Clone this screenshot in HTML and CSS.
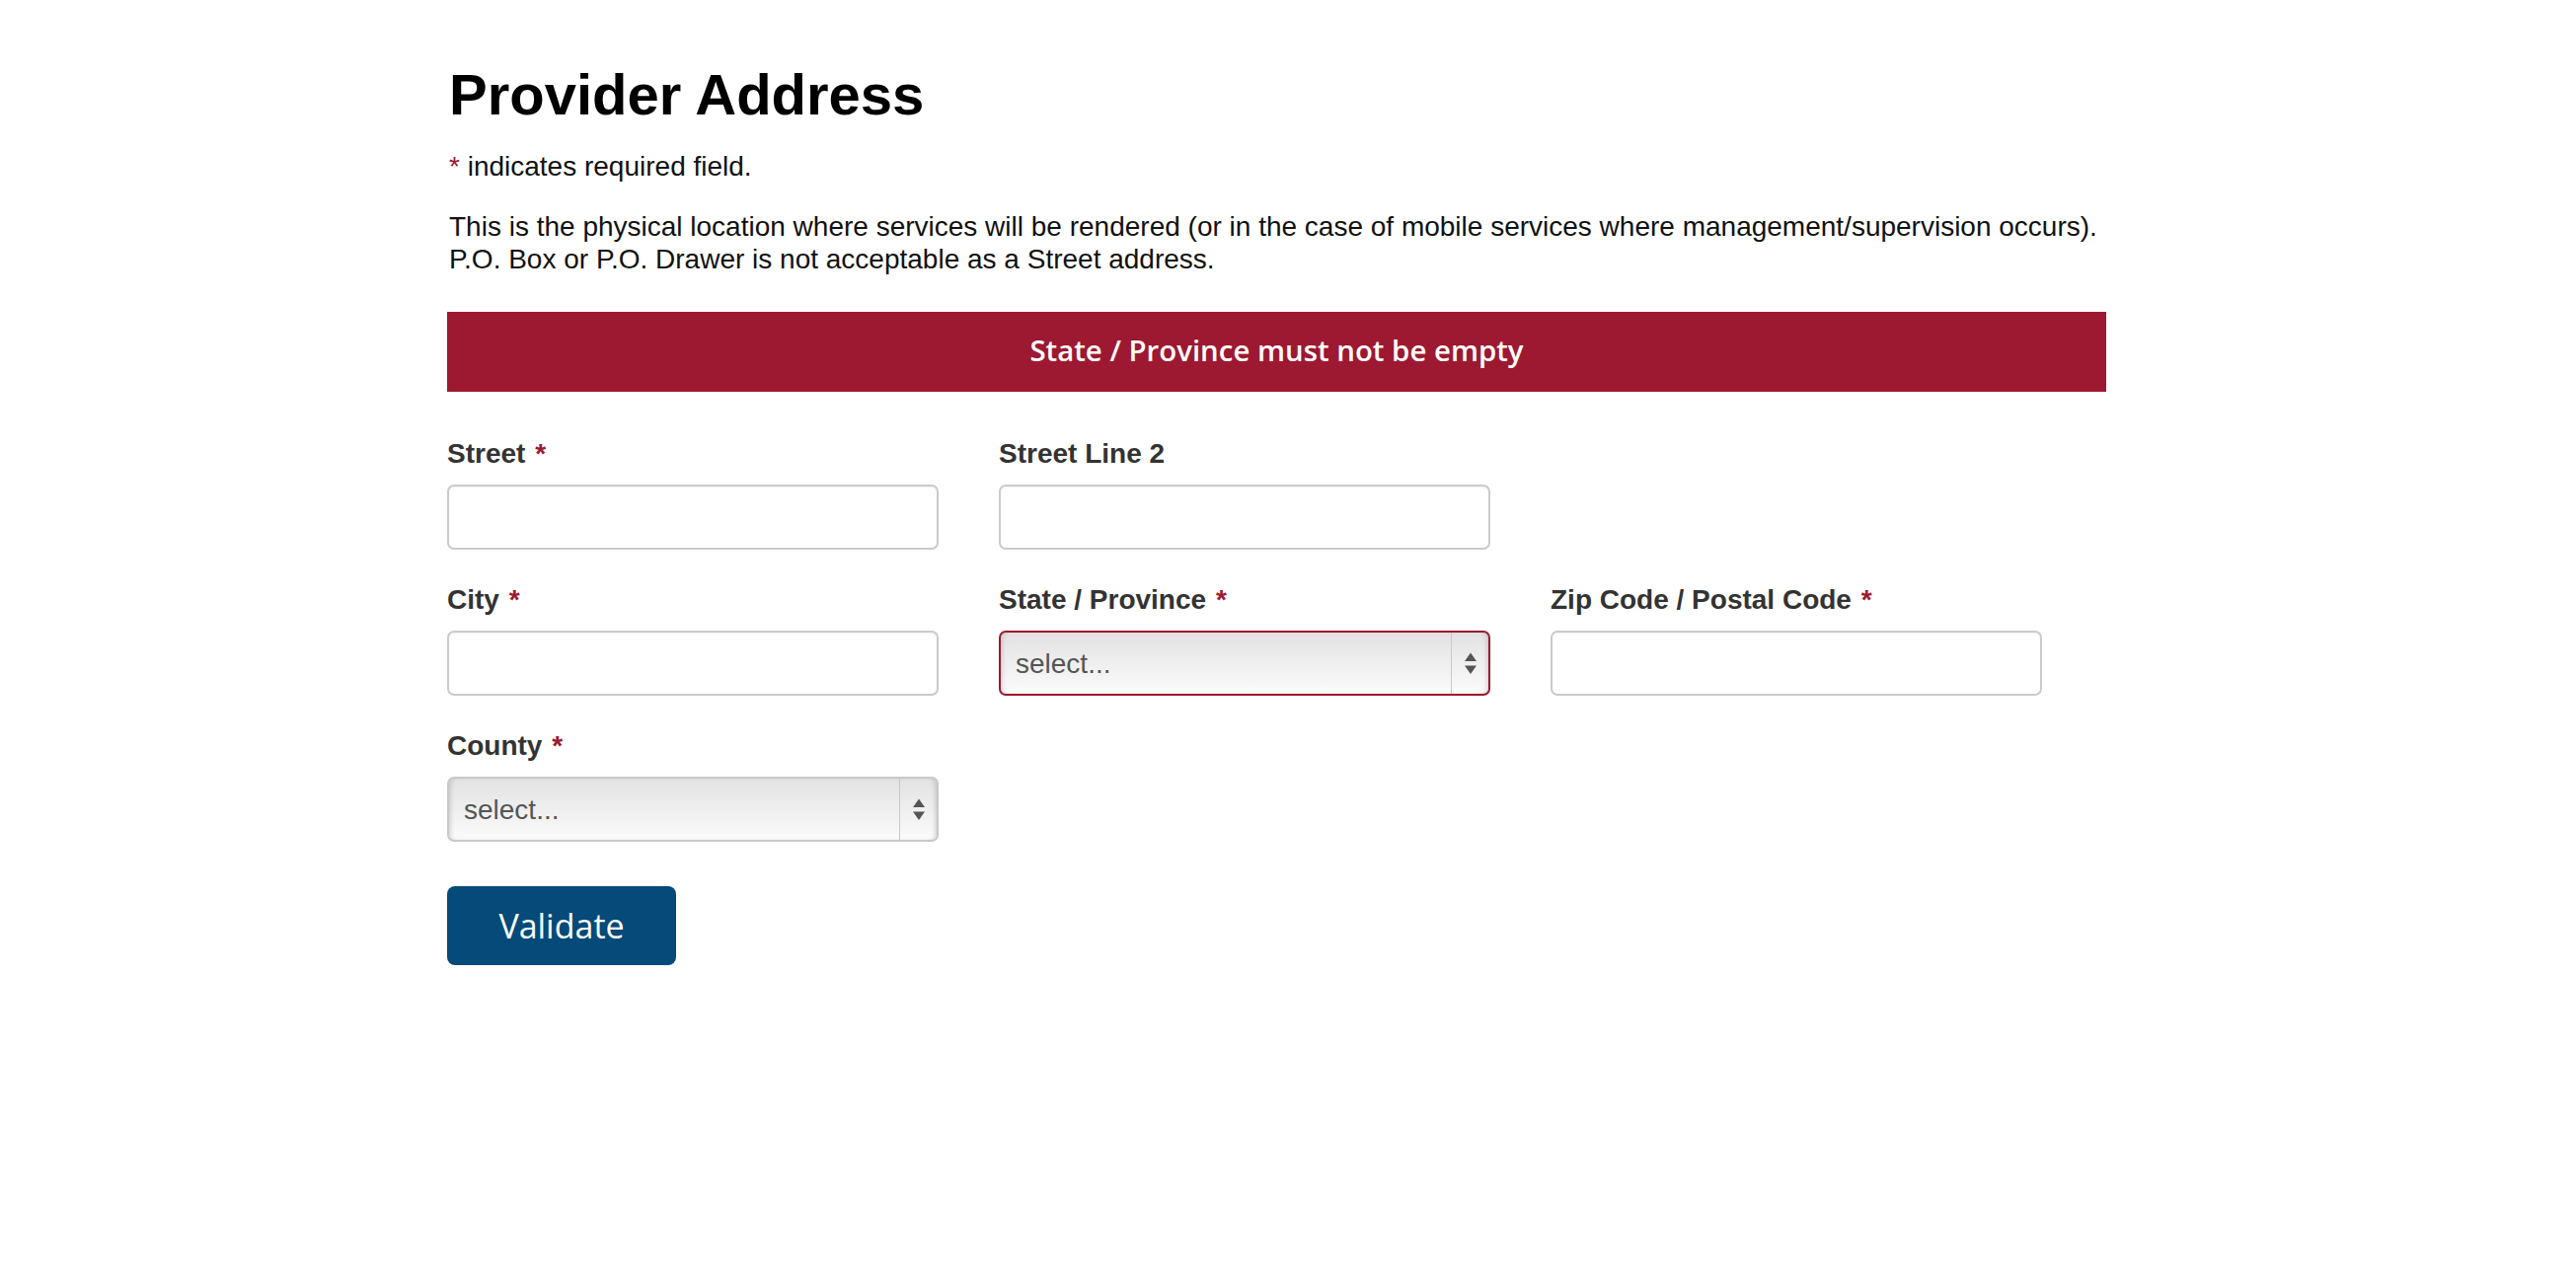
FILE: index.html
```html
<!DOCTYPE html>
<html lang="en">
<head>
<meta charset="utf-8">
<title>Provider Address</title>
<link rel="stylesheet" href="styles.css">
</head>
<body>
<main class="page">
  <h1 class="title">Provider Address</h1>
  <p class="note"><span class="req-note">*</span> indicates required field.</p>
  <p class="desc">This is the physical location where services will be rendered (or in the case of mobile services where management/supervision occurs).<br>P.O. Box or P.O. Drawer is not acceptable as a Street address.</p>
  <div class="alert">State / Province must not be empty</div>
  <form class="form">
    <div class="field">
      <label class="label" for="street">Street <span class="req">*</span></label>
      <input class="input" id="street" type="text">
    </div>
    <div class="field">
      <label class="label" for="street2">Street Line 2</label>
      <input class="input" id="street2" type="text">
    </div>
    <div class="field"></div>
    <div class="field">
      <label class="label" for="city">City <span class="req">*</span></label>
      <input class="input" id="city" type="text">
    </div>
    <div class="field">
      <label class="label" for="state">State / Province <span class="req">*</span></label>
      <div class="select-wrap">
        <select class="select select-error" id="state"><option>select...</option></select>
        <span class="select-btn"><svg width="14" height="26" viewBox="0 0 14 26"><path d="M7 2.5 L13 11 L1 11 Z" fill="#555"/><path d="M1 15.5 L13 15.5 L7 24 Z" fill="#555"/></svg></span>
      </div>
    </div>
    <div class="field">
      <label class="label" for="zip">Zip Code / Postal Code <span class="req">*</span></label>
      <input class="input" id="zip" type="text">
    </div>
    <div class="field">
      <label class="label" for="county">County <span class="req">*</span></label>
      <div class="select-wrap">
        <select class="select" id="county"><option>select...</option></select>
        <span class="select-btn"><svg width="14" height="26" viewBox="0 0 14 26"><path d="M7 2.5 L13 11 L1 11 Z" fill="#555"/><path d="M1 15.5 L13 15.5 L7 24 Z" fill="#555"/></svg></span>
      </div>
    </div>
  </form>
  <button class="btn" type="button">Validate</button>
</main>
</body>
</html>
```

FILE: styles.css
```css
html, body {
  margin: 0;
  padding: 0;
  background: #fff;
}

body {
  font-family: "Liberation Sans", Arial, Helvetica, sans-serif;
  color: #111;
}

.page {
  width: 1681px;
  margin: 0 0 0 453px;
  padding-top: 63px;
  padding-bottom: 80px;
}

.title {
  margin: 0;
  font-size: 58px;
  line-height: 66px;
  font-weight: 700;
  color: #000;
  padding-left: 2px;
}

.note {
  margin: 23px 0 0;
  font-size: 28px;
  line-height: 33px;
  padding-left: 2px;
}

.req-note {
  color: #9c1931;
}

.desc {
  margin: 28px 0 0;
  font-size: 28px;
  line-height: 33px;
  white-space: nowrap;
  padding-left: 2px;
}

.alert {
  margin-top: 37px;
  height: 81px;
  background: #9c1931;
  color: #fff;
  font-family: "Open Sans", "Noto Sans", sans-serif;
  font-weight: 600;
  font-size: 29.4px;
  line-height: 79px;
  text-align: center;
}

.form {
  margin-top: 47px;
  display: grid;
  grid-template-columns: repeat(3, 498px);
  column-gap: 61px;
  row-gap: 35px;
}

.field {
  display: flex;
  flex-direction: column;
}

.label {
  font-size: 28px;
  line-height: 32px;
  font-weight: 700;
  color: #333;
  margin-bottom: 15px;
}

.req {
  color: #9c1931;
  margin-left: 2px;
}

.input {
  box-sizing: border-box;
  height: 66px;
  width: 100%;
  margin: 0;
  border: 2px solid #cbcbcb;
  border-radius: 7px;
  background: #fff;
  box-shadow: inset 0 1px 2px rgba(0, 0, 0, 0.06);
  font-family: inherit;
  font-size: 27px;
  padding: 0 15px;
}

.select-wrap {
  position: relative;
  height: 66px;
}

.select {
  -webkit-appearance: none;
  appearance: none;
  box-sizing: border-box;
  width: 100%;
  height: 66px;
  margin: 0;
  border: 2px solid #c9c9c9;
  border-radius: 7px;
  background: linear-gradient(to bottom, #e2e2e2 0%, #ececec 40%, #fbfbfb 100%);
  box-shadow: inset 4px 0 5px -3px rgba(0, 0, 0, 0.18), inset -4px 0 5px -3px rgba(0, 0, 0, 0.18);
  font-family: "Liberation Sans", Arial, sans-serif;
  font-size: 28px;
  color: #555;
  padding: 0 50px 0 15px;
  outline: none;
}

.select-error {
  border-color: #9c1931;
}

.select-btn {
  position: absolute;
  top: 2px;
  bottom: 2px;
  right: 2px;
  width: 37px;
  border-left: 1px solid #c8c8c8;
  display: flex;
  align-items: center;
  justify-content: center;
  pointer-events: none;
}

.btn {
  margin-top: 45px;
  width: 232px;
  height: 80px;
  border: none;
  border-radius: 8px;
  background: #054a78;
  color: #fff;
  font-family: "Open Sans", "Noto Sans", sans-serif;
  font-size: 34px;
  font-weight: 400;
  padding: 0;
  cursor: pointer;
  display: block;
}
```
